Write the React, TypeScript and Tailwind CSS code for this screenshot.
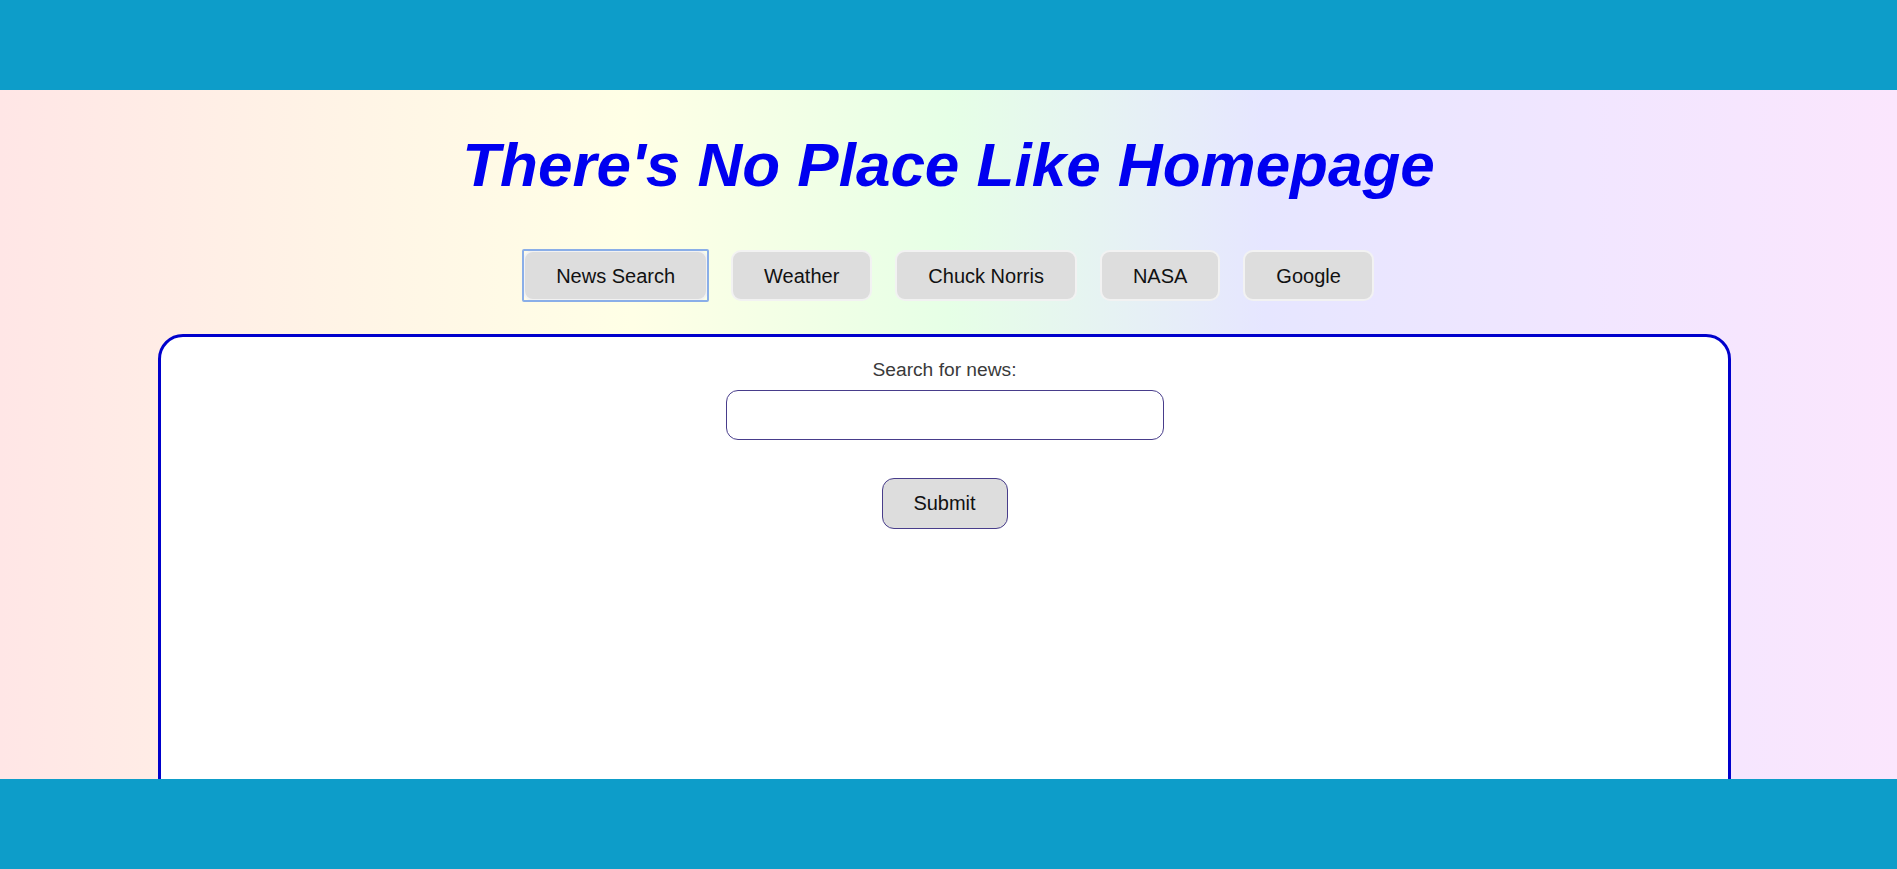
const tabs = ['News Search', 'Weather', 'Chuck Norris', 'NASA', 'Google']

export default function App() {
  return (
    <div
      className="min-h-screen bg-[linear-gradient(to_right,#ffe6e6,#fff3e6,#ffffe6,#e6ffe6,#e6e6ff,#f1e6ff,#fbe6fd)]"
      style={{ fontFamily: '"Liberation Sans", Arial, sans-serif' }}
    >
      {/* header / footer bars */}
      <header className="fixed top-0 left-0 right-0 h-[90px] bg-[#0d9dc9] z-10" />
      <footer className="fixed bottom-0 left-0 right-0 h-[90px] bg-[#0d9dc9] z-10" />

      <main className="pt-[130px] pb-[120px]">
        <h1 className="text-center text-[62px] leading-[70px] font-bold italic text-[#0000f0]">
          There's No Place Like Homepage
        </h1>

        <nav className="mt-[50px] flex justify-center gap-[23px]">
          {tabs.map((t, i) => (
            <button
              key={t}
              className="relative h-[51px] px-[31px] rounded-[10px] border-2 border-[#f2f2f2] bg-[#dddddd] text-[20px] text-[#111]"
            >
              {t}
              {i === 0 && (
                <span className="absolute -inset-[3px] rounded-[2px] border-2 border-[#8aaee8] pointer-events-none" />
              )}
            </button>
          ))}
        </nav>

        <section className="mt-[33px] ml-[158px] w-[1573px] min-h-[560px] rounded-[25px] border-[3px] border-[#0000cc] bg-white pt-[19px]">
          <div className="flex flex-col items-center">
            <label className="text-[19.2px] text-[#3a3a3a]">Search for news:</label>
            <input
              type="text"
              className="mt-[5px] h-[50px] w-[438px] rounded-[12px] border-[1.5px] border-[#483d8b] bg-white px-3 text-[18px] outline-none"
            />
            <button className="mt-[38px] h-[51px] w-[126px] rounded-[12px] border-[1.5px] border-[#483d8b] bg-[#dddddd] text-[20px] text-[#111]">
              Submit
            </button>
          </div>
        </section>
      </main>
    </div>
  )
}
